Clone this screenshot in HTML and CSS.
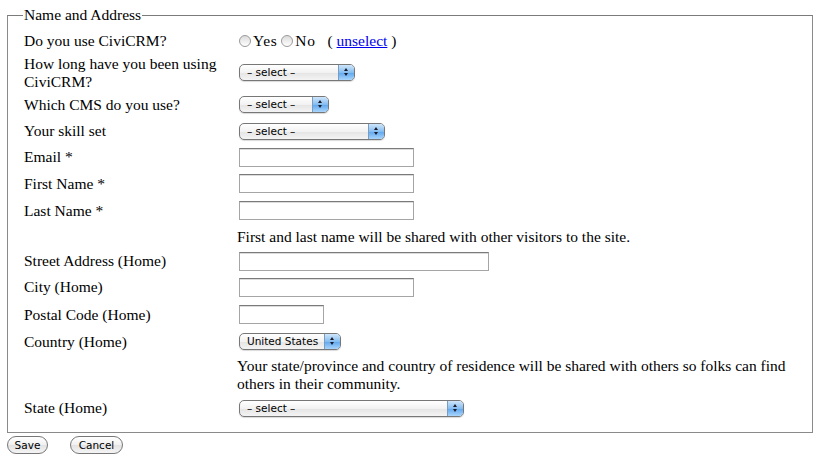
FILE: index.html
```html
<!DOCTYPE html>
<html>
<head>
<meta charset="utf-8">
<link rel="stylesheet" href="styles.css">
</head>
<body>
<form class="form">
  <fieldset class="box">
    <legend class="legend">Name and Address</legend>
    <div class="grid">
      <div class="label r1">Do you use CiviCRM?</div>
      <div class="ctl r1">
        <span class="radio"></span><span class="opt">Yes</span>
        <span class="radio"></span><span class="opt">No</span>
        <span class="paren">( <a href="#" class="link">unselect</a> )</span>
      </div>

      <div class="label r2">How long have you been using CiviCRM?</div>
      <div class="ctl r2"><span class="select w115"><span class="sel-text">– select –</span><span class="arrows"></span></span></div>

      <div class="label r3">Which CMS do you use?</div>
      <div class="ctl r3"><span class="select w89"><span class="sel-text">– select –</span><span class="arrows"></span></span></div>

      <div class="label r4">Your skill set</div>
      <div class="ctl r4"><span class="select w145"><span class="sel-text">– select –</span><span class="arrows"></span></span></div>

      <div class="label r5">Email *</div>
      <div class="ctl r5"><span class="input w175"></span></div>

      <div class="label r6">First Name *</div>
      <div class="ctl r6"><span class="input w175"></span></div>

      <div class="label r7">Last Name *</div>
      <div class="ctl r7"><span class="input w175"></span></div>

      <div class="label r8"></div>
      <div class="ctl help r8">First and last name will be shared with other visitors to the site.</div>

      <div class="label r9">Street Address (Home)</div>
      <div class="ctl r9"><span class="input w250"></span></div>

      <div class="label r10">City (Home)</div>
      <div class="ctl r10"><span class="input w175"></span></div>

      <div class="label r11">Postal Code (Home)</div>
      <div class="ctl r11"><span class="input w85"></span></div>

      <div class="label r12">Country (Home)</div>
      <div class="ctl r12"><span class="select w102 country"><span class="sel-text">United States</span><span class="arrows"></span></span></div>

      <div class="label r13"></div>
      <div class="ctl help r13">Your state/province and country of residence will be shared with others so folks can find others in their community.</div>

      <div class="label r14">State (Home)</div>
      <div class="ctl r14"><span class="select w225"><span class="sel-text">– select –</span><span class="arrows"></span></span></div>
    </div>
  </fieldset>
  <div class="buttons">
    <span class="btn save">Save</span>
    <span class="btn cancel">Cancel</span>
  </div>
</form>
</body>
</html>
```
FILE: styles.css
```css
html, body {
  margin: 0;
  padding: 0;
  background: #fff;
}
body {
  font-family: "Liberation Serif", "Times New Roman", serif;
  font-size: 15.5px;
  color: #000;
}
.form {
  padding: 7px 0 0 7px;
  width: 806px;
}
.box {
  margin: 0;
  border: 1px solid #8a8a8a;
  border-top-color: #7b7b7b;
  padding: 5px 10px 11px 16px;
  min-width: 0;
}
.legend {
  padding: 0 1px;
  margin-left: -1px;
  line-height: 16px;
}
.grid {
  display: grid;
  grid-template-columns: 215px 1fr;
  grid-template-rows: 26px 37px 27px 26px 26px 27px 27px 25px 24px 28px 27px 27px 40px 26px;
  align-items: center;
  line-height: 18px;
}
.ctl {
  display: flex;
  align-items: center;
}
.help {
  display: block;
  margin-left: -2px;
}
.radio {
  width: 12px;
  height: 12px;
  border: 1px solid #9a9a9a;
  border-radius: 50%;
  background: linear-gradient(#dcdcdc, #ffffff);
  box-sizing: border-box;
}
.opt {
  padding-left: 2px;
  margin-right: 4px;
  letter-spacing: 0.6px;
}
.paren { margin-left: 8px; }
.link { color: #0000ee; text-decoration: underline; }
.select {
  display: inline-flex;
  align-items: center;
  height: 17px;
  border: 1px solid #777;
  border-radius: 5px;
  background: linear-gradient(#ffffff 0%, #f2f2f2 50%, #e4e4e4 51%, #f4f4f4 100%);
  box-sizing: border-box;
  overflow: hidden;
  font-family: "Lucida Grande", "DejaVu Sans", sans-serif;
  font-size: 10.5px;
  box-shadow: 0 1px 1px rgba(0,0,0,0.15);
}
.sel-text {
  flex: 1;
  padding-left: 7px;
  line-height: 15px;
}
.arrows {
  width: 15px;
  height: 15px;
  background: linear-gradient(#cfe6fb 0%, #86bdf0 50%, #5ea6ee 51%, #a9d5fb 100%);
  border-left: 1px solid #7a9cc0;
  position: relative;
}
.arrows::before, .arrows::after {
  content: "";
  position: absolute;
  left: 5px;
  border-left: 2.5px solid transparent;
  border-right: 2.5px solid transparent;
}
.arrows::before { top: 3px; border-bottom: 3px solid #1a1a2a; }
.arrows::after { top: 8px; border-top: 3px solid #1a1a2a; }
.w115 { width: 116px; }
.w89 { width: 90px; }
.w145 { width: 146px; }
.w102 { width: 102px; }
.w225 { width: 225px; }
.input {
  display: inline-block;
  height: 19px;
  box-sizing: border-box;
  border: 1px solid #a5a5a5;
  border-top-color: #7a7a7a;
  background: #fff;
  box-shadow: inset 0 1px 0 #dcdcdc;
}
.w175 { width: 175px; }
.w250 { width: 250px; }
.w85 { width: 85px; }
.buttons {
  display: flex;
  gap: 22px;
  padding: 3px 0 0 0;
}
.btn {
  display: inline-flex;
  align-items: center;
  justify-content: center;
  height: 18px;
  box-sizing: border-box;
  border: 1px solid #777;
  border-radius: 9px;
  background: linear-gradient(#ffffff 0%, #f0f0f0 50%, #e2e2e2 51%, #f5f5f5 100%);
  font-family: "Lucida Grande", "DejaVu Sans", sans-serif;
  font-size: 10.5px;
}
.save { width: 41px; }
.cancel { width: 53px; }
```
